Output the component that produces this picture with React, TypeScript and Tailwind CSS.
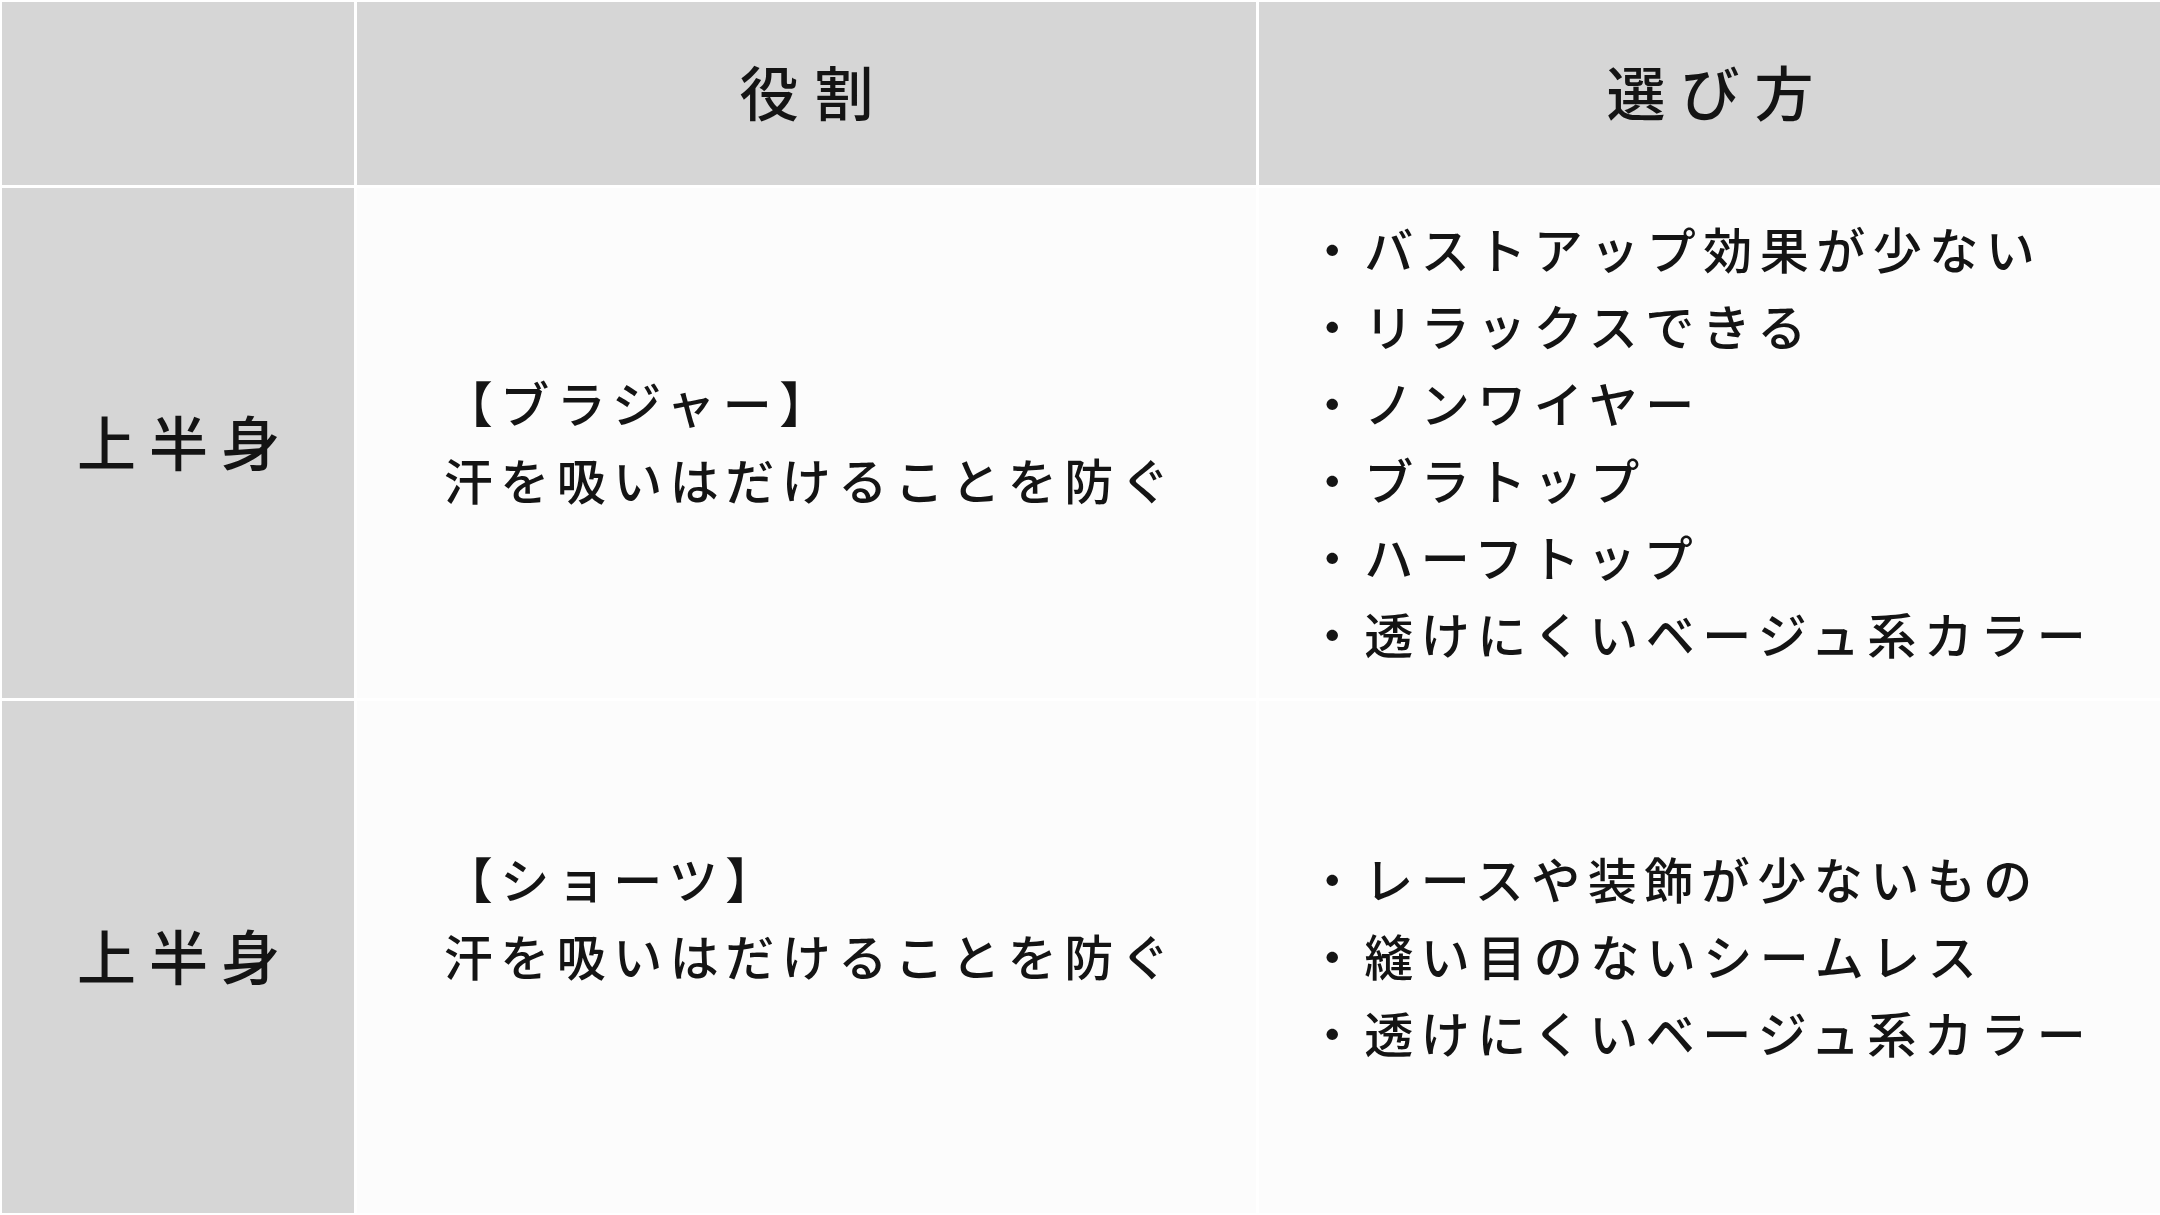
const rows = [
  {
    label: "上半身",
    role: ["【ブラジャー】", "汗を吸いはだけることを防ぐ"],
    tips: [
      "・バストアップ効果が少ない",
      "・リラックスできる",
      "・ノンワイヤー",
      "・ブラトップ",
      "・ハーフトップ",
      "・透けにくいベージュ系カラー",
    ],
  },
  {
    label: "上半身",
    role: ["【ショーツ】", "汗を吸いはだけることを防ぐ", ""],
    tips: [
      "・レースや装飾が少ないもの",
      "・縫い目のないシームレス",
      "・透けにくいベージュ系カラー",
    ],
  },
];

function Lines({ lines }: { lines: string[] }) {
  return (
    <div className="text-left text-[49px] font-medium leading-[77px] tracking-[7.5px] text-[#141414]">
      {lines.map((line, i) => (
        <div key={i} className="whitespace-nowrap">
          {line || "\u00a0"}
        </div>
      ))}
    </div>
  );
}

export default function App() {
  return (
    <div className="h-[1215px] w-[2160px] bg-white pt-[2px] pb-[2px] pl-[2px] font-['Noto_Sans_CJK_JP',sans-serif]">
      <div className="grid h-full grid-cols-[352px_899px_1fr] grid-rows-[183px_510px_1fr] gap-[3px]">
        {/* header */}
        <div className="bg-[#d6d6d6]" />
        <div className="flex items-center justify-center bg-[#d6d6d6] pb-[5px] pl-[16px] text-[59px] font-medium tracking-[16px] text-[#141414]">
          役割
        </div>
        <div className="flex items-center justify-center bg-[#d6d6d6] pb-[5px] pl-[16px] text-[59px] font-medium tracking-[15px] text-[#141414]">
          選び方
        </div>

        {rows.map((row, i) => (
          <div key={i} className="contents">
            <div className="flex items-center justify-center bg-[#d6d6d6] pb-[4px] pl-[14px] text-[59px] font-medium tracking-[13px] text-[#141414]">
              {row.label}
            </div>
            <div className="flex items-center justify-center bg-[#fcfcfc] pb-[6px] pl-[8px]">
              <Lines lines={row.role} />
            </div>
            <div className="flex items-center justify-center bg-[#fcfcfc] pb-[6px] pr-[18px]">
              <Lines lines={row.tips} />
            </div>
          </div>
        ))}
      </div>
    </div>
  );
}
